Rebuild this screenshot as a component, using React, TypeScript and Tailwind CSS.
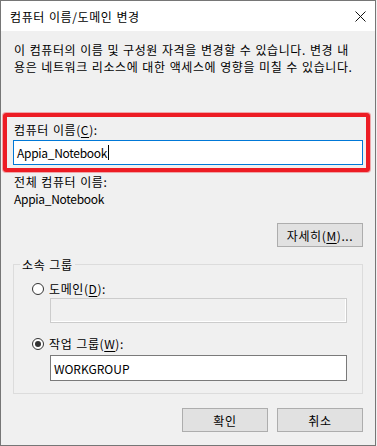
import type { ReactNode } from "react";

const FONT =
  "font-['Noto_Sans_CJK_KR','Noto_Sans',sans-serif] tracking-[0.6px] [word-spacing:0.7px]";

function Key({ k }: { k: string }) {
  return (
    <>
      (<span className="underline underline-offset-2">{k}</span>)
    </>
  );
}

function Radio({ checked, children }: { checked?: boolean; children: ReactNode }) {
  return (
    <div className="flex h-[17px] items-center gap-[5px]">
      <span className="flex h-[12px] w-[12px] items-center justify-center rounded-full border border-[#333333] bg-white">
        {checked && <span className="h-[6px] w-[6px] rounded-full bg-[#333333]" />}
      </span>
      <span>{children}</span>
    </div>
  );
}

function Button({ children }: { children: ReactNode }) {
  return (
    <button className="flex h-[24px] w-[86px] items-center justify-center border border-[#adadad] bg-[#e1e1e1] text-[12px] leading-[17px] text-black">
      {children}
    </button>
  );
}

export default function App() {
  return (
    <div className={`h-[446px] w-[377px] bg-[#f0f0f0] ${FONT} text-[12px] leading-[17px] text-black`}>
      <div className="flex h-[446px] w-[376px] flex-col border border-[#767676] bg-[#f0f0f0]">
        {/* title bar */}
        <div className="flex h-[30px] shrink-0 items-center justify-between bg-white pl-[9px] pr-[9px]">
          <span>컴퓨터 이름/도메인 변경</span>
          <svg width="11" height="11" viewBox="0 0 11 11" className="mt-[1px]">
            <path d="M0.5 0.5 L10.5 10.5 M10.5 0.5 L0.5 10.5" stroke="#111" strokeWidth="1" />
          </svg>
        </div>

        <div className="flex flex-col px-[12px]">
          <p className="mt-[10px] whitespace-nowrap pl-[1px]">
            이 컴퓨터의 이름 및 구성원 자격을 변경할 수 있습니다. 변경 내
            <br />
            용은 네트워크 리소스에 대한 액세스에 영향을 미칠 수 있습니다.
          </p>

          <div className="relative mt-[46px]">
            <div className="pl-[1px]">
              컴퓨터 이름<Key k="C" />:
            </div>
            <div className="mt-[2px] flex h-[25px] items-center border border-[#0078d7] bg-white pl-[3px]">
              <span className="tracking-[-0.3px]">Appia_Notebook</span>
              <span className="ml-[1px] h-[15px] w-[1px] bg-black" />
            </div>
            {/* red highlight drawn over the screenshot */}
            <div className="pointer-events-none absolute -top-[8px] -right-[7px] -bottom-[7px] -left-[10px] rounded-[3px] border-4 border-[#ed1c24] shadow-[0_0_0_1px_rgba(237,28,36,0.35)]" />
          </div>

          <div className="mt-[8px] pl-[1px]">전체 컴퓨터 이름:</div>
          <div className="pl-[1px] tracking-[-0.3px]">Appia_Notebook</div>

          <div className="mt-[16px] flex justify-end">
            <Button>
              자세히<Key k="M" />...
            </Button>
          </div>

          <fieldset className="mt-[9px] border border-[#dcdcdc] pb-[12px]">
            <legend className="ml-[6px] px-[2px]">소속 그룹</legend>
            <div className="pl-[18px] pr-[15px]">
              <div className="mt-[7px]">
                <Radio>
                  도메인<Key k="D" />:
                </Radio>
              </div>
              <div className="ml-[18px] mt-[1px] h-[25px] border border-[#cccccc] bg-[#f0f0f0] shadow-[inset_-1px_-1px_0_#ffffff]" />
              <div className="mt-[12px]">
                <Radio checked>
                  작업 그룹<Key k="W" />:
                </Radio>
              </div>
              <div className="ml-[18px] mt-[3px] flex h-[26px] items-center border border-[#7a7a7a] bg-white pl-[3px] tracking-normal">
                WORKGROUP
              </div>
            </div>
          </fieldset>

          <div className="mt-[14px] flex justify-end gap-[9px]">
            <Button>확인</Button>
            <Button>취소</Button>
          </div>
        </div>
      </div>
    </div>
  );
}
